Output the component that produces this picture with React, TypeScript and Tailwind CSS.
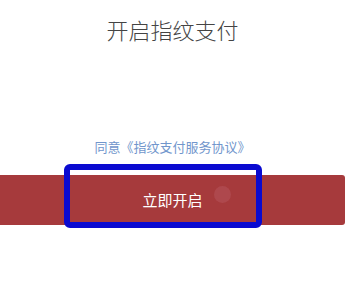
export default function App() {
  return (
    <div
      className="w-[356px] h-[291px] bg-white overflow-hidden"
      style={{ fontFamily: '"Noto Sans CJK SC", "Noto Sans", sans-serif' }}
    >
      <div className="w-[345px] flex flex-col items-center">
        <h1 className="mt-[14px] text-[22px] leading-[30px] text-[#444] font-light">开启指纹支付</h1>
        <div className="mt-[94px] text-[13px] leading-[18px] text-[#7196cc]">同意《指纹支付服务协议》</div>
        <div className="relative mt-[19px] w-full">
          <button className="w-full h-[50px] bg-[#a63a3c] rounded-r-[3px] text-white text-[15px] flex items-center justify-center">
            立即开启
          </button>
          <span className="absolute left-[214px] top-[11px] w-[17px] h-[17px] rounded-full bg-[#b45258] opacity-60" />
          <div className="absolute left-[64px] top-[-11px] w-[198px] h-[64px] border-[6px] border-[#0a0ad0] rounded-[6px]" />
        </div>
      </div>
    </div>
  );
}
